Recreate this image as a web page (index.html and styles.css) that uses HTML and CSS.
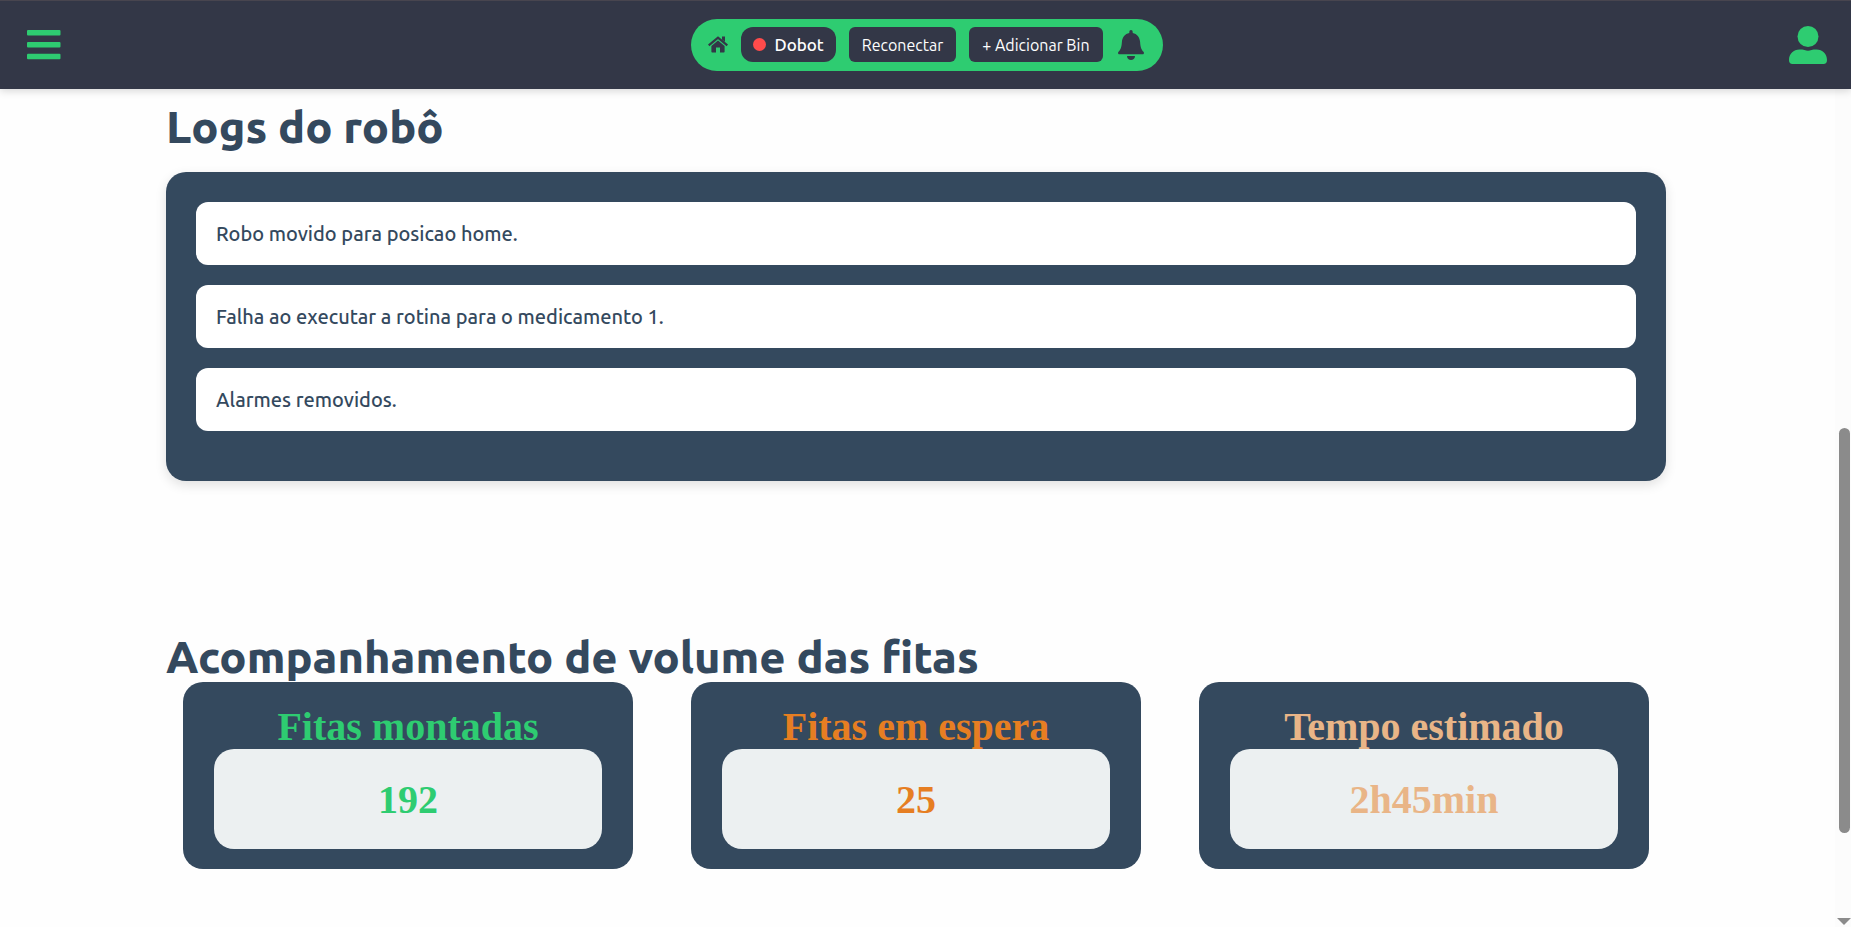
FILE: index.html
```html
<!DOCTYPE html>
<html lang="pt-BR">
<head>
<meta charset="utf-8">
<meta name="viewport" content="width=device-width, initial-scale=1">
<title>Dobot</title>
<link rel="stylesheet" href="styles.css">
</head>
<body>
<header class="topbar">
  <button class="icon-button" type="button" aria-label="Menu">
    <svg class="menu-icon" viewBox="0 0 34 30"><rect y="0" width="33.500" height="5.500" rx="1"/><rect y="12" width="33.500" height="5.500" rx="1"/><rect y="23.700" width="33.500" height="5.500" rx="1"/></svg>
  </button>
  <nav class="pill">
    <a class="home" href="#" aria-label="Início">
      <svg class="home-icon" viewBox="0 0 20 17"><path d="M.7 9.400 10 1.600l9.300 7.800" fill="none" stroke="currentColor" stroke-width="2.200"/><path d="M14 .4h3v5.500l-3-2.500z"/><path d="M10 4.600 16.600 10v5.800q0 .8-.8.800H12v-5H8v5H4.200q-.8 0-.8-.8V10z"/></svg>
    </a>
    <button class="status" type="button"><span class="dot"></span>Dobot</button>
    <button class="action" type="button">Reconectar</button>
    <button class="action" type="button">+ Adicionar Bin</button>
    <button class="icon-button" type="button" aria-label="Notificações">
      <svg class="bell-icon" viewBox="0 0 26 30"><path d="M11.300 3V1.700a1.700 1.700 0 0 1 3.400 0V3c4.300.8 7 4.200 7.400 9 .4 5.500 1.100 7.300 3.400 9.800.9 1 .4 2.400-1 2.400h-23c-1.400 0-1.900-1.400-1-2.400 2.300-2.500 3-4.300 3.400-9.800.4-4.800 3.100-8.200 7.400-9z"/><path d="M9 26h8c0 5.200-8 5.200-8 0z"/></svg>
    </button>
  </nav>
  <button class="icon-button" type="button" aria-label="Usuário">
    <svg class="user-icon" viewBox="0 0 38 38"><circle cx="19" cy="10.500" r="10.500"/><path d="M10.500 23.500c2 0 3.500 0 5 .6 2 .8 5 .8 7 0 1.500-.6 3-.6 5-.6 6 0 10.500 4.500 10.500 10.500 0 2.600-1.200 4-3.500 4h-31C1.200 38 0 36.600 0 34 0 28 4.500 23.500 10.500 23.500z"/></svg>
  </button>
</header>
<main class="content">
  <section>
    <h1 class="heading">Logs do robô</h1>
    <ul class="logs">
      <li class="log">Robo movido para posicao home.</li>
      <li class="log">Falha ao executar a rotina para o medicamento 1.</li>
      <li class="log">Alarmes removidos.</li>
    </ul>
  </section>
  <section>
    <h1 class="heading">Acompanhamento de volume das fitas</h1>
    <div class="cards">
      <article class="card done"><h2 class="card-title">Fitas montadas</h2><p class="value">192</p></article>
      <article class="card waiting"><h2 class="card-title">Fitas em espera</h2><p class="value">25</p></article>
      <article class="card time"><h2 class="card-title">Tempo estimado</h2><p class="value">2h45min</p></article>
    </div>
  </section>
</main>
<div class="scrollbar" aria-hidden="true">
  <div class="thumb"></div>
  <svg class="arrow" viewBox="0 0 14 7"><path d="M0 0h14L7 7z"/></svg>
</div>
</body>
</html>
```
FILE: styles.css
```css
* { box-sizing: border-box; }

body {
  margin: 0;
  min-height: 100vh;
  overflow: hidden;
  padding-right: 19px;
  background: #fefefe;
  color: #34495e;
  font-family: Ubuntu, "Noto Sans", sans-serif;
}

h1, h2, p, ul { margin: 0; padding: 0; }
svg { display: block; fill: currentColor; }
button { border: 0; font-family: inherit; cursor: pointer; }

.topbar {
  position: relative;
  z-index: 3;
  display: grid;
  grid-template-columns: 1fr auto 1fr;
  align-items: center;
  margin-right: -19px;
  padding: 18px 24px 18px 27px;
  border-top: 1px solid #48454f;
  background: #333747;
  color: #2ecc71;
  box-shadow: 0 2px 8px rgba(0, 0, 0, 0.16);
}

.icon-button { padding: 0; background: none; color: inherit; }
.topbar > .icon-button:last-child { justify-self: end; }
.menu-icon { width: 34px; height: 30px; }
.user-icon { width: 38px; height: 38px; }

.pill {
  display: flex;
  align-items: center;
  gap: 13px;
  padding: 8px 19px 9px 17px;
  border-radius: 26px;
  background: #2ecc71;
  color: #333747;
}

.home { color: inherit; }
.home-icon { width: 20px; height: 17px; }
.bell-icon { width: 26px; height: 30px; margin-left: 2px; }

.status, .action {
  display: flex;
  align-items: center;
  height: 35px;
  padding: 0 13px;
  border-radius: 6px;
  background: #333747;
  color: #fff;
  font-size: 16px;
  font-weight: 400;
}

.status { gap: 8px; padding: 0 12px; border-radius: 12px; font-size: 17px; font-weight: 500; }
.dot { width: 13px; height: 13px; border-radius: 50%; background: #ff4b4b; }

.content {
  display: flex;
  flex-direction: column;
  gap: 150px;
  width: min(1500px, 100% - 60px);
  margin: 0 auto;
  padding-top: 12px;
}

.heading { font-size: 45px; font-weight: 800; line-height: 51px; }

.logs {
  display: flex;
  flex-direction: column;
  gap: 20px;
  margin-top: 20px;
  padding: 30px 30px 50px;
  border-radius: 20px;
  background: #34495e;
  box-shadow: 0 4px 12px rgba(0, 0, 0, 0.12);
  list-style: none;
}

.log {
  padding: 20px;
  border-radius: 12px;
  background: #fff;
  font-size: 20px;
  font-weight: 500;
  line-height: 23px;
}

.cards {
  position: relative;
  display: grid;
  grid-template-columns: repeat(3, 1fr);
  gap: 58px;
  padding: 0 17px;
}

.card {
  padding: 22px 31px 20px;
  border-radius: 20px;
  background: #34495e;
  font-family: "Liberation Serif", serif;
  font-size: 40px;
  font-weight: 700;
  line-height: 45px;
  text-align: center;
}

.card-title { font-size: 40px; }
.value { padding: 28px 0 27px; border-radius: 20px; background: #ecf0f1; }
.done { color: #2ecc71; }
.waiting { color: #e67e22; }
.time { color: #e9b587; }

.scrollbar {
  position: fixed;
  inset: 0 0 0 auto;
  z-index: 1;
  width: 16px;
  background: #fcfcfc;
  color: #8b8b8b;
}

.thumb {
  position: absolute;
  top: 46.200%;
  right: 1px;
  width: 11px;
  height: 43.700%;
  border-radius: 6px;
  background: #8b8b8b;
}

.arrow { position: absolute; right: 0; bottom: 2px; width: 14px; height: 7px; }
```
